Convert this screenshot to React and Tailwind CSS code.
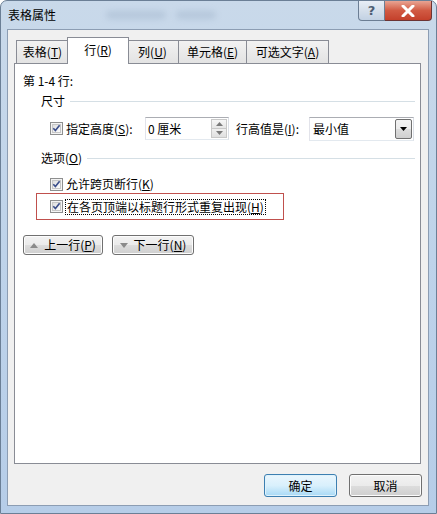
import React from "react";

const Check = () => (
  <svg width="13" height="13" viewBox="0 0 13 13" className="shrink-0 block">
    <defs>
      <linearGradient id="cbg" x1="0" y1="0" x2="1" y2="1">
        <stop offset="0" stopColor="#dcdcdc" />
        <stop offset="1" stopColor="#ffffff" />
      </linearGradient>
    </defs>
    <rect x="0.5" y="0.5" width="12" height="12" fill="#f4f4f4" stroke="#8e8f8f" />
    <rect x="2.5" y="2.5" width="8" height="8" fill="url(#cbg)" stroke="#c7c7c7" />
    <path d="M3.3 6.3 L5.4 8.6 L9.6 3.3" fill="none" stroke="#3a4d8a" strokeWidth="1.6" />
  </svg>
);

const U = ({ children }) => <span className="underline underline-offset-[1px]">{children}</span>;

const Btn = ({ children, className = "", def = false }) => (
  <div
    className={
      "flex items-center justify-center rounded-[3px] border " +
      (def
        ? "border-[#3c7fb1] bg-gradient-to-b from-[#eaf6fd] via-[#d9f0fc] to-[#a7d9f5] shadow-[inset_0_0_0_1px_#dff2fc]"
        : "border-[#707070] bg-[linear-gradient(to_bottom,#f2f2f2_0%,#ebebeb_50%,#dddddd_51%,#cfcfcf_100%)] shadow-[inset_0_0_0_1px_#fcfcfc]") +
      " " +
      className
    }
  >
    {children}
  </div>
);

const Tab = ({ children, w, selected }) =>
  selected ? (
    <div
      className={`relative z-10 -mx-[2px] -mb-[1px] flex h-[27px] items-start justify-center border border-b-0 border-[#898c95] bg-white pt-[4px] ${w}`}
    >
      {children}
    </div>
  ) : (
    <div
      className={`-ml-[1px] first:ml-0 flex h-[23px] items-center justify-center border border-b-0 border-[#898c95] bg-gradient-to-b from-[#f2f2f2] to-[#e3e3e3] ${w}`}
    >
      {children}
    </div>
  );

export default function App() {
  return (
    <div className="w-[437px] h-[514px] overflow-hidden bg-white font-['Noto_Sans_CJK_SC','Microsoft_YaHei',sans-serif] text-[12px] leading-[16px] text-black">
      <div className="flex h-[514px] w-[437px] flex-col rounded-t-[7px] border border-[#6b7f96] bg-gradient-to-b from-[#c9d9ea] via-[#bed3ea] to-[#b6cde8]">
        {/* title bar */}
        <div className="flex h-[28px] shrink-0 items-start">
          <div className="ml-[7px] mt-[6px] text-[12px] leading-[16px] text-black">表格属性</div>
          <div className="ml-[50px] mt-[10px] h-[8px] w-[60px] rounded-full bg-[#98acc4] opacity-40 blur-[3px]" />
          <div className="ml-[10px] mt-[10px] h-[8px] w-[40px] rounded-full bg-[#98acc4] opacity-40 blur-[3px]" />
          <div className="ml-auto flex">
            <div className="flex h-[20px] w-[27px] items-center justify-center rounded-bl-[4px] border border-t-0 border-[#6c7e94] bg-gradient-to-b from-[#e8eef6] via-[#d5dfeb] to-[#c2d1e3] text-[13px] font-bold leading-none text-[#4d5d73] font-['DejaVu_Sans',sans-serif]">
              ?
            </div>
            <div className="mr-[4px] flex h-[20px] w-[47px] items-center justify-center rounded-br-[4px] border border-l-0 border-t-0 border-[#6c3434] bg-gradient-to-b from-[#e8a493] via-[#d15a43] to-[#c4402b]">
              <svg width="14" height="12" viewBox="0 0 14 12">
                <path d="M2 1 L12 11 M12 1 L2 11" stroke="#ffffff" strokeWidth="3" strokeLinecap="round" />
              </svg>
            </div>
          </div>
        </div>

        {/* client */}
        <div className="ml-[6px] mr-[7px] flex h-[477px] shrink-0 flex-col border border-[#8c9db3] bg-[#f0f0f0]">
          {/* tabs */}
          <div className="ml-[8px] mt-[7px] flex h-[26px] items-end">
            <Tab w="w-[53px]">表格(<U>T</U>)</Tab>
            <Tab w="w-[62px]" selected>行(<U>R</U>)</Tab>
            <Tab w="w-[53px]">列(<U>U</U>)</Tab>
            <Tab w="w-[69px]">单元格(<U>E</U>)</Tab>
            <Tab w="w-[83px]">可选文字(<U>A</U>)</Tab>
          </div>

          {/* panel */}
          <div className="ml-[6px] flex h-[401px] w-[407px] flex-col border border-[#898c95] bg-white">
            <div className="ml-[8px] mt-[9px] h-[16px]">第 1-4 行:</div>
            <div className="mt-[4px] flex h-[16px] items-center">
              <span className="ml-[26px]">尺寸</span>
              <div className="ml-[5px] mr-[5px] h-px flex-1 bg-[#d5dfe5]" />
            </div>
            <div className="mt-[8px] flex h-[23px] items-center">
              <div className="ml-[35px] flex w-[95px] items-center">
                <Check />
                <span className="ml-[3px]">
                  指定高度(<U>S</U>):
                </span>
              </div>
              <div className="flex h-[23px] w-[84px] items-center border border-[#abadb3] border-b-[#e3e9ef] border-l-[#e2e3ea] border-r-[#dbdfe6] bg-white">
                <span className="ml-[2px] flex-1">0 厘米</span>
                <div className="mr-[1px] flex h-[19px] w-[16px] flex-col border border-[#c8c8c8]">
                  <div className="flex flex-1 items-center justify-center bg-gradient-to-b from-[#f7f7f7] to-[#e6e6e6] border-b border-[#c8c8c8]">
                    <svg width="7" height="4" viewBox="0 0 7 4"><path d="M0 4 L3.5 0 L7 4 Z" fill="#7a7a7a" /></svg>
                  </div>
                  <div className="flex flex-1 items-center justify-center bg-gradient-to-b from-[#f0f0f0] to-[#e0e0e0]">
                    <svg width="7" height="4" viewBox="0 0 7 4"><path d="M0 0 L3.5 4 L7 0 Z" fill="#7a7a7a" /></svg>
                  </div>
                </div>
              </div>
              <span className="ml-[7px] w-[73px]">
                行高值是(<U>I</U>):
              </span>
              <div className="flex h-[24px] w-[105px] items-center border border-[#abadb3] border-b-[#e3e9ef] border-l-[#e2e3ea] border-r-[#dbdfe6] bg-white">
                <span className="ml-[3px] flex-1">最小值</span>
                <div className="mr-[1px] flex h-[20px] w-[17px] items-center justify-center rounded-[2px] border border-[#707070] bg-[linear-gradient(to_bottom,#f2f2f2_0%,#ebebeb_50%,#dddddd_51%,#cfcfcf_100%)]">
                  <svg width="7" height="4" viewBox="0 0 7 4"><path d="M0 0 L3.5 4 L7 0 Z" fill="#000" /></svg>
                </div>
              </div>
            </div>
            <div className="mt-[10px] flex h-[16px] items-center">
              <span className="ml-[26px]">
                选项(<U>O</U>)
              </span>
              <div className="ml-[5px] mr-[5px] h-px flex-1 bg-[#d5dfe5]" />
            </div>
            <div className="mt-[10px] flex h-[16px] items-center">
              <div className="ml-[35px]">
                <Check />
              </div>
              <span className="ml-[3px]">
                允许跨页断行(<U>K</U>)
              </span>
            </div>
            <div className="ml-[21px] mt-[1px] flex h-[27px] w-[248px] items-center border border-[#c0504d]">
              <div className="ml-[13px]">
                <Check />
              </div>
              <span className="ml-[2px] border border-dotted border-black px-px leading-[14px]">
                在各页顶端以标题行形式重复出现(<U>H</U>)
              </span>
            </div>
            <div className="ml-[8px] mt-[15px] flex h-[20px]">
              <Btn className="w-[80px] h-[20px] gap-[6px]">
                <svg width="8" height="5" viewBox="0 0 8 5"><path d="M0 5 L4 0 L8 5 Z" fill="#8a8a8a" /></svg>
                <span>
                  上一行(<U>P</U>)
                </span>
              </Btn>
              <Btn className="ml-[9px] w-[82px] h-[20px] gap-[6px]">
                <svg width="8" height="5" viewBox="0 0 8 5"><path d="M0 0 L4 5 L8 0 Z" fill="#8a8a8a" /></svg>
                <span>
                  下一行(<U>N</U>)
                </span>
              </Btn>
            </div>
          </div>

          {/* bottom buttons */}
          <div className="mt-[10px] mr-[6px] flex justify-end gap-[12px]">
            <Btn def className="w-[73px] h-[23px]">确定</Btn>
            <Btn className="w-[73px] h-[23px]">取消</Btn>
          </div>
        </div>
      </div>
    </div>
  );
}
